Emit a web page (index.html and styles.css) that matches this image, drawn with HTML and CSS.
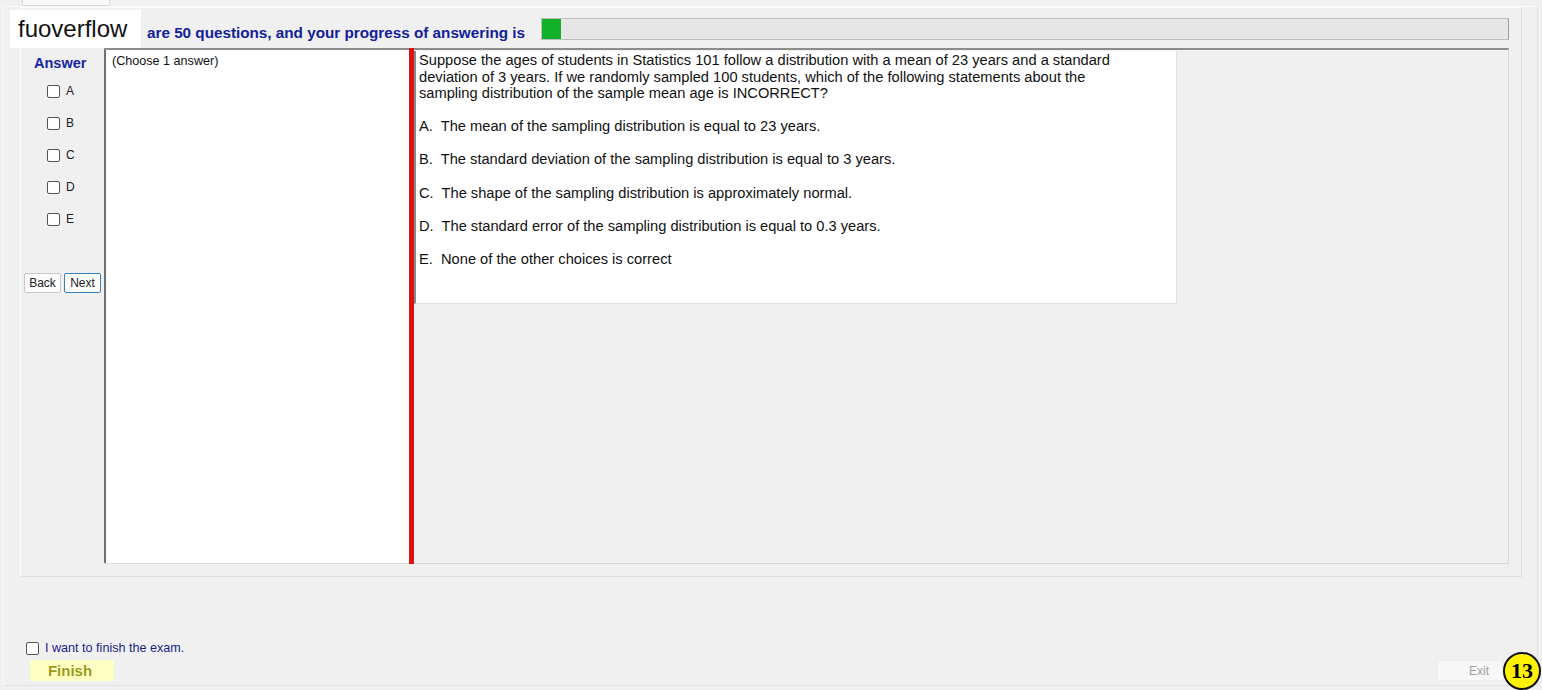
FILE: index.html
```html
<!DOCTYPE html>
<html>
<head>
<meta charset="utf-8">
<link rel="stylesheet" href="styles.css">
</head>
<body>
<div class="tabs"><div class="tab"></div></div>
<div class="frame">
  <div class="watermark">fuoverflow</div>
  <div class="panel">
    <div class="header">
      <div class="progress-label">are 50 questions, and your progress of answering is</div>
      <div class="progress"><div class="progress-fill" style="width:19px"></div></div>
    </div>
    <div class="body">
      <div class="answers">
        <div class="answers-title">Answer</div>
        <label class="opt"><span class="cb"></span>A</label>
        <label class="opt"><span class="cb"></span>B</label>
        <label class="opt"><span class="cb"></span>C</label>
        <label class="opt"><span class="cb"></span>D</label>
        <label class="opt"><span class="cb"></span>E</label>
        <div class="nav">
          <button class="btn">Back</button>
          <button class="btn btn-focus">Next</button>
        </div>
      </div>
      <div class="main">
        <div class="notes">(Choose 1 answer)</div>
        <div class="divider"></div>
        <div class="qarea">
          <div class="question">
            <p class="qtext">Suppose the ages of students in Statistics 101 follow a distribution with a mean of 23 years and a standard<br>deviation of 3 years. If we randomly sampled 100 students, which of the following statements about the<br>sampling distribution of the sample mean age is INCORRECT?</p>
            <p class="choice">A.&nbsp; The mean of the sampling distribution is equal to 23 years.</p>
            <p class="choice">B.&nbsp; The standard deviation of the sampling distribution is equal to 3 years.</p>
            <p class="choice">C.&nbsp; The shape of the sampling distribution is approximately normal.</p>
            <p class="choice">D.&nbsp; The standard error of the sampling distribution is equal to 0.3 years.</p>
            <p class="choice">E.&nbsp; None of the other choices is correct</p>
          </div>
        </div>
      </div>
    </div>
  </div>
  <div class="footer">
    <div class="finish-col">
      <label class="finish-check"><span class="cb"></span>I want to finish the exam.</label>
      <button class="finish-btn">Finish</button>
    </div>
    <button class="exit-btn">Exit</button>
  </div>
  <div class="badge">13</div>
</div>
</body>
</html>
```

FILE: styles.css
```css
* { box-sizing: border-box; }
html, body { margin: 0; padding: 0; }
body {
  background: #f0f0f0;
  font-family: "Liberation Sans", Arial, sans-serif;
  width: 1542px;
  height: 690px;
  overflow: hidden;
  position: relative;
}
.tabs { height: 6px; display: flex; }
.tab {
  margin-left: 22px;
  width: 88px;
  height: 6px;
  background: #f9f9f9;
  border: 1px solid #dcdcdc;
  border-top: none;
}
.frame {
  position: relative;
  margin-left: 3px;
  width: 1535px;
  height: 680px;
  border: 1px solid #fafafa;
  border-right-color: #e2e2e2;
  border-bottom-color: #e2e2e2;
  display: flex;
  flex-direction: column;
}
.watermark {
  position: absolute;
  left: 6px;
  top: 3px;
  width: 131px;
  height: 38px;
  background: #ffffff;
  color: #111;
  font-size: 24px;
  line-height: 38px;
  padding-left: 8px;
  font-family: "Liberation Sans", Arial, sans-serif;
}
.panel {
  margin-left: 16px;
  width: 1502px;
  height: 570px;
  border: 1px solid #fbfbfb;
  border-right-color: #dedede;
  border-bottom-color: #dedede;
  display: flex;
  flex-direction: column;
}
.header {
  height: 40px;
  display: flex;
  align-items: flex-start;
  padding-left: 126px;
}
.progress-label {
  color: #12209a;
  font-weight: bold;
  font-size: 15.25px;
  width: 394px;
  padding-top: 16px;
  white-space: nowrap;
}
.progress {
  width: 968px;
  height: 22px;
  margin-top: 10px;
  background: #e6e6e6;
  border: 1px solid #bdbdbd;
  border-right-color: #9a9a9a;
}
.progress-fill {
  height: 100%;
  background: #12b12a;
}
.body {
  display: flex;
  height: 516px;
}
.answers {
  width: 83px;
  padding-left: 3px;
  display: flex;
  flex-direction: column;
}
.answers-title {
  color: #1726a8;
  font-weight: bold;
  font-size: 14.5px;
  padding-left: 10px;
  margin-top: 7px;
  height: 19px;
}
.opt {
  display: flex;
  align-items: center;
  height: 32px;
  padding-left: 23px;
  font-size: 12px;
  color: #222;
}
.opt:first-of-type { margin-top: 1px; }
.cb {
  display: inline-block;
  width: 13px;
  height: 13px;
  border: 1px solid #555;
  border-radius: 2px;
  background: #fff;
  margin-right: 6px;
}
.nav {
  display: flex;
  gap: 3px;
  margin-top: 38px;
}
.btn {
  width: 37px;
  height: 20px;
  padding: 0;
  font-family: "Liberation Sans", Arial, sans-serif;
  font-size: 12px;
  color: #222;
  background: #fdfdfd;
  border: 1px solid #c8c8c8;
  border-radius: 2px;
}
.btn-focus { border-color: #3a7fb8; }
.main {
  flex: 1;
  display: flex;
  border-top: 2px solid #8c8c8c;
  border-right: 1px solid #d8d8d8;
  border-bottom: 1px solid #d8d8d8;
  margin-right: 12px;
}
.notes {
  width: 305px;
  background: #fff;
  border-left: 2px solid #707070;
  font-size: 12.6px;
  color: #111;
  padding: 4px 0 0 6px;
}
.divider {
  width: 5px;
  background: #db1212;
  margin-top: -2px;
  margin-bottom: -1px;
}
.qarea {
  flex: 1;
  padding-top: 1px;
}
.question {
  width: 763px;
  height: 253px;
  background: #fff;
  border-left: 2px solid #8a8a8a;
  border-right: 1px solid #e0e0e0;
  border-bottom: 1px solid #e0e0e0;
  padding: 1px 0 0 3px;
  color: #111;
  font-size: 14.67px;
  line-height: 16.5px;
}
.question p { margin: 0; white-space: nowrap; }
.question .choice { margin-top: 16.7px; }
.footer {
  flex: 1;
  display: flex;
  justify-content: space-between;
  align-items: flex-end;
  padding: 0 34px 4px 22px;
}
.finish-col {
  display: flex;
  flex-direction: column;
}
.finish-check {
  display: flex;
  align-items: center;
  font-size: 12.6px;
  color: #1c1c8c;
  height: 16px;
  margin-bottom: 4px;
}
.finish-check .cb { margin-right: 6px; }
.finish-btn {
  margin-left: 4px;
  width: 84px;
  height: 21px;
  padding: 0 4px 0 0;
  background: #ffffc3;
  border: none;
  color: #9c9a1e;
  font-family: "Liberation Sans", Arial, sans-serif;
  font-weight: bold;
  font-size: 15px;
}
.exit-btn {
  width: 66px;
  height: 21px;
  padding: 0 0 0 18px;
  background: #f7f7f7;
  border: 1px solid #ededed;
  color: #a0a0a0;
  font-family: "Liberation Sans", Arial, sans-serif;
  font-size: 12px;
}
.badge {
  position: absolute;
  right: -4px;
  bottom: -5px;
  width: 38px;
  height: 38px;
  border-radius: 50%;
  background: #fff200;
  border: 2px solid #111;
  color: #000;
  font-family: "Liberation Serif", "Times New Roman", serif;
  font-weight: bold;
  font-size: 22px;
  line-height: 34px;
  text-align: center;
}
```
